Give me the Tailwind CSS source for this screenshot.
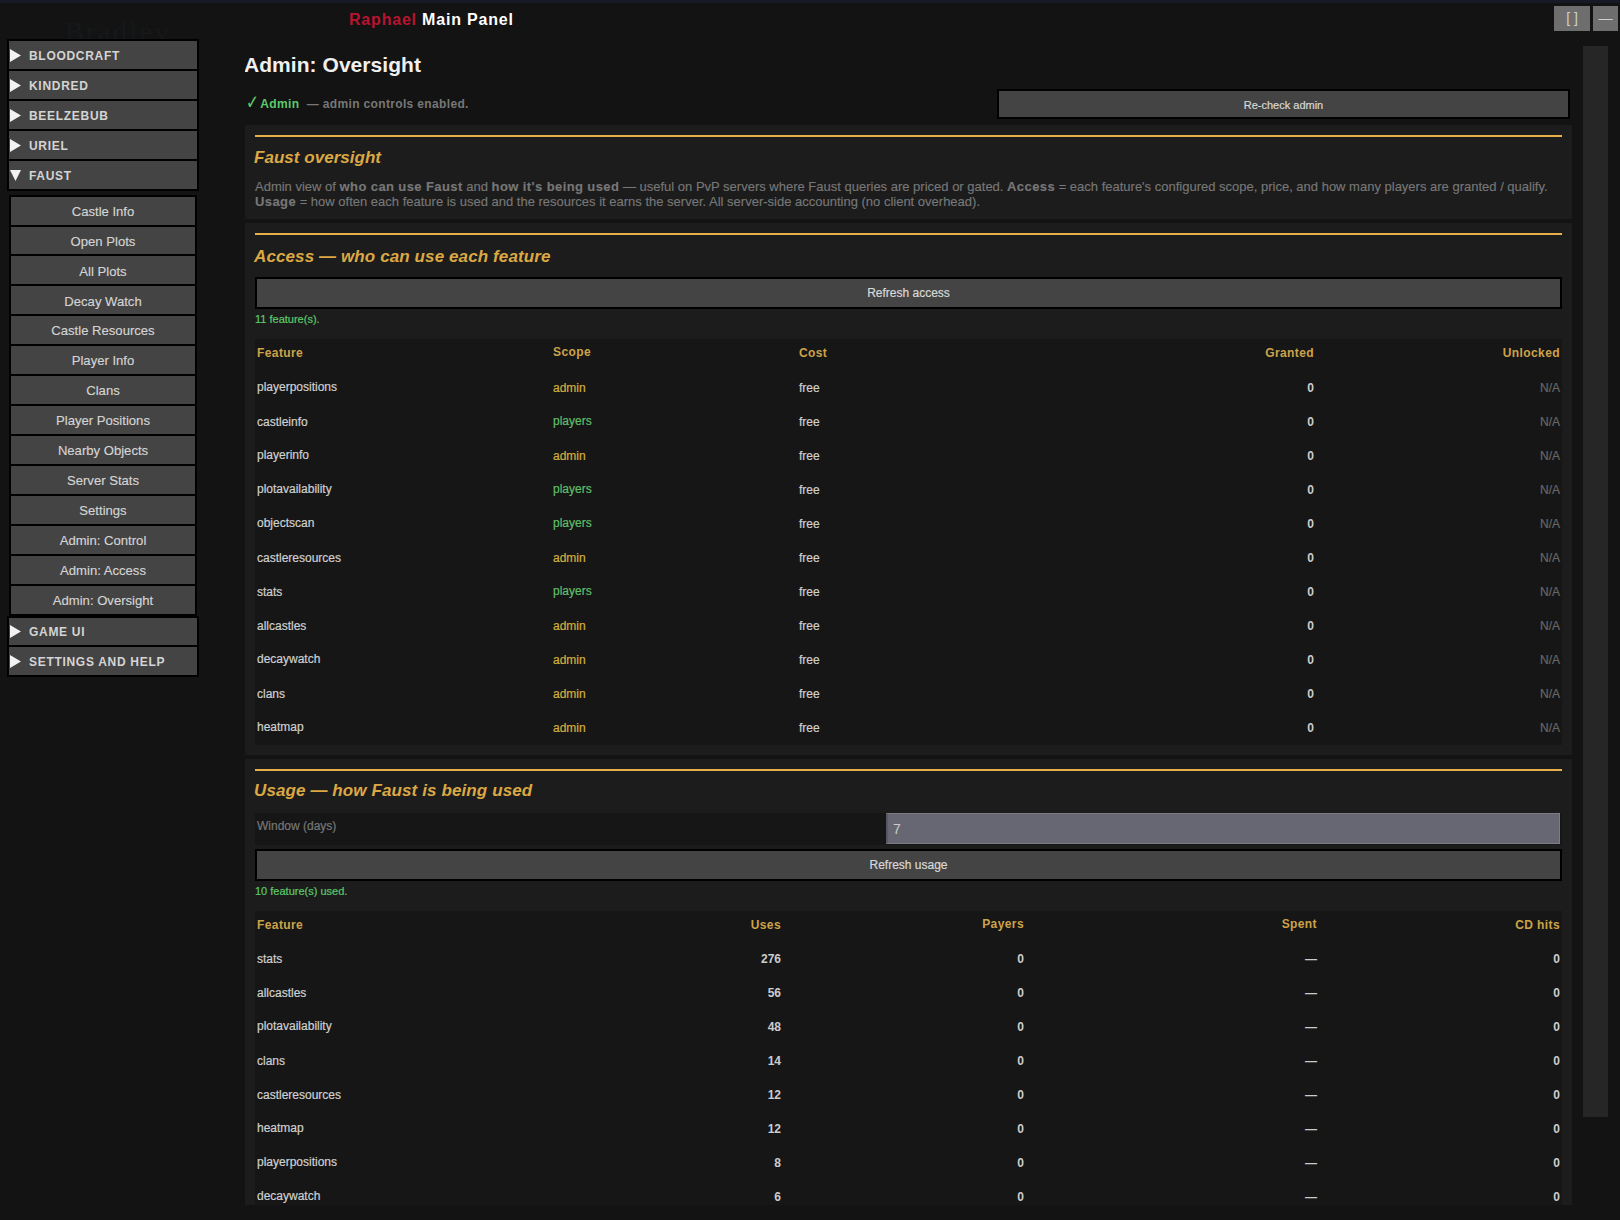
<!DOCTYPE html>
<html><head><meta charset="utf-8"><script src="https://cdn.jsdelivr.net/npm/@tailwindcss/browser@4"></script></head>
<body class="bg-[#131313] m-0 font-['Liberation_Sans',Arial,sans-serif]">
<div class="relative w-[1620px] h-[1220px] overflow-hidden flex flex-col bg-[#131313]">
  <div class="h-[3px] bg-[#151a24] shrink-0"></div>
  <span class="absolute left-[65px] top-[11px] font-['Liberation_Serif',serif] text-[28px] tracking-[2.5px] text-[#15191c]">Bradley</span>
  <div class="h-[36px] shrink-0 flex items-start">
    <div class="ml-[349px] mt-[7px] text-[16px] leading-[20px] font-bold tracking-[0.8px] text-white"><span class="text-[#b8142f]">Raphael</span> Main Panel</div>
    <div class="ml-auto mr-[2px] mt-[3px] flex gap-[3px]">
      <div class="w-[36px] h-[25px] bg-[#6e6e6e] text-[#d0d0d0] text-[14px] flex items-center justify-center">[ ]</div>
      <div class="w-[25px] h-[25px] bg-[#6e6e6e] text-[#d0d0d0] text-[14px] flex items-center justify-center">—</div>
    </div>
  </div>
  <div class="flex flex-1 min-h-0">
    <aside class="relative w-[245px] shrink-0 pl-[7px] text-[#d4d4d4]">
      <div class="w-[192px] bg-black p-[2px] flex flex-col gap-[2px]">
        <div class="h-[27.93px] pt-[2px] bg-[#444444] flex items-center font-bold text-[12px] tracking-[0.7px]"><svg class="w-[11px] h-[13px] ml-[1px] mr-[8px]" viewBox="0 0 11 13"><path d="M0 0 L11 6.5 L0 13Z" fill="#f2f2f2"/></svg>BLOODCRAFT</div>
        <div class="h-[27.93px] pt-[2px] bg-[#444444] flex items-center font-bold text-[12px] tracking-[0.7px]"><svg class="w-[11px] h-[13px] ml-[1px] mr-[8px]" viewBox="0 0 11 13"><path d="M0 0 L11 6.5 L0 13Z" fill="#f2f2f2"/></svg>KINDRED</div>
        <div class="h-[27.93px] pt-[2px] bg-[#444444] flex items-center font-bold text-[12px] tracking-[0.7px]"><svg class="w-[11px] h-[13px] ml-[1px] mr-[8px]" viewBox="0 0 11 13"><path d="M0 0 L11 6.5 L0 13Z" fill="#f2f2f2"/></svg>BEELZEBUB</div>
        <div class="h-[27.93px] pt-[2px] bg-[#444444] flex items-center font-bold text-[12px] tracking-[0.7px]"><svg class="w-[11px] h-[13px] ml-[1px] mr-[8px]" viewBox="0 0 11 13"><path d="M0 0 L11 6.5 L0 13Z" fill="#f2f2f2"/></svg>URIEL</div>
        <div class="h-[27.93px] pt-[2px] bg-[#444444] flex items-center font-bold text-[12px] tracking-[0.7px]"><svg class="w-[11px] h-[11px] ml-[1px] mr-[8px]" viewBox="0 0 11 11"><path d="M0 0 L11 0 L5.5 11Z" fill="#f2f2f2"/></svg>FAUST</div>
      </div>
      <div class="w-[188px] ml-[2px] mt-[4px] bg-black p-[2px] flex flex-col gap-[2px] text-[13.1px] text-center [-webkit-text-stroke:0.15px]">
        <div class="h-[27.93px] pt-[2px] bg-[#444444] flex items-center justify-center">Castle Info</div>
        <div class="h-[27.93px] pt-[2px] bg-[#444444] flex items-center justify-center">Open Plots</div>
        <div class="h-[27.93px] pt-[2px] bg-[#444444] flex items-center justify-center">All Plots</div>
        <div class="h-[27.93px] pt-[2px] bg-[#444444] flex items-center justify-center">Decay Watch</div>
        <div class="h-[27.93px] pt-[2px] bg-[#444444] flex items-center justify-center">Castle Resources</div>
        <div class="h-[27.93px] pt-[2px] bg-[#444444] flex items-center justify-center">Player Info</div>
        <div class="h-[27.93px] pt-[2px] bg-[#444444] flex items-center justify-center">Clans</div>
        <div class="h-[27.93px] pt-[2px] bg-[#444444] flex items-center justify-center">Player Positions</div>
        <div class="h-[27.93px] pt-[2px] bg-[#444444] flex items-center justify-center">Nearby Objects</div>
        <div class="h-[27.93px] pt-[2px] bg-[#444444] flex items-center justify-center">Server Stats</div>
        <div class="h-[27.93px] pt-[2px] bg-[#444444] flex items-center justify-center">Settings</div>
        <div class="h-[27.93px] pt-[2px] bg-[#444444] flex items-center justify-center">Admin: Control</div>
        <div class="h-[27.93px] pt-[2px] bg-[#444444] flex items-center justify-center">Admin: Access</div>
        <div class="h-[27.93px] pt-[2px] bg-[#444444] flex items-center justify-center">Admin: Oversight</div>
      </div>
      <div class="w-[192px] bg-black p-[2px] flex flex-col gap-[2px]">
        <div class="h-[27.93px] pt-[1px] bg-[#444444] flex items-center font-bold text-[12px] tracking-[0.7px]"><svg class="w-[11px] h-[13px] ml-[1px] mr-[8px]" viewBox="0 0 11 13"><path d="M0 0 L11 6.5 L0 13Z" fill="#f2f2f2"/></svg>GAME UI</div>
        <div class="h-[27.93px] pt-[1px] bg-[#444444] flex items-center font-bold text-[12px] tracking-[0.7px]"><svg class="w-[11px] h-[13px] ml-[1px] mr-[8px]" viewBox="0 0 11 13"><path d="M0 0 L11 6.5 L0 13Z" fill="#f2f2f2"/></svg>SETTINGS AND HELP</div>
      </div>
    </aside>
    <main class="w-[1327px] shrink-0 h-[1166px] overflow-hidden">
      <h1 class="h-[50px] ml-[-1px] pt-[13px] text-[21px] leading-[26px] font-bold tracking-[0.05px] text-[#f0f0f0]">Admin: Oversight</h1>
      <div class="h-[36px] flex items-start">
        <div class="mt-[6px] text-[12px] leading-[16px] font-bold tracking-[0.35px] text-[#777777]"><span class="text-[#5cc96a]"><span class="inline-block w-[9px] ml-[1px] mr-[2px] text-[15px] leading-[16px] font-normal scale-y-[1.3]">✓</span> Admin</span>&nbsp; — admin controls enabled.</div>
        <div class="ml-auto mr-[2px] w-[573px] h-[30px] pt-[2px] bg-[#444444] border-2 border-black flex items-center justify-center text-[11px] text-[#d8d8d8] [-webkit-text-stroke:0.2px]">Re-check admin</div>
      </div>
      <section class="bg-[#1c1c1c] h-[94px] px-[10px] pt-[10px] mb-[4px]">
        <div class="h-[2px] bg-[#e8b04b]"></div>
        <h2 class="ml-[-1px] mt-[11px] text-[17px] leading-[20px] font-bold italic tracking-[0.03px] text-[#dba844]">Faust oversight</h2>
        <p class="mt-[11px] text-[13px] leading-[15px] text-[#777777] [-webkit-text-stroke:0.15px]">Admin view of <b class="tracking-[0.4px]">who can use Faust</b> and <b class="tracking-[0.4px]">how it's being used</b> — useful on PvP servers where Faust queries are priced or gated. <b class="tracking-[0.4px]">Access</b> = each feature's configured scope, price, and how many players are granted / qualify. <b class="tracking-[0.4px]">Usage</b> = how often each feature is used and the resources it earns the server. All server-side accounting (no client overhead).</p>
      </section>
      <section class="bg-[#1c1c1c] h-[532px] px-[10px] pt-[10px] mb-[4px]">
        <div class="h-[2px] bg-[#e8b04b]"></div>
        <h2 class="ml-[-1px] mt-[12px] text-[17px] leading-[20px] font-bold italic tracking-[0.11px] text-[#dba844]">Access — who can use each feature</h2>
        <div class="mt-[10px] h-[32px] bg-[#444444] border-2 border-black flex items-center justify-center text-[12px] text-[#d8d8d8] [-webkit-text-stroke:0.2px]">Refresh access</div>
        <div class="mt-[3px] h-[15px] leading-[15px] text-[11px] text-[#5cc96a] [-webkit-text-stroke:0.2px]">11 feature(s).</div>
        <div class="mt-[12px] bg-[#161616] text-[12px] text-[#d0d0d0] [-webkit-text-stroke:0.2px] [&_b]:[-webkit-text-stroke:0px] [&_b]:text-[#cccccc]">
          <div class="h-[32px] px-[2px] grid grid-cols-[296px_246px_200px_315px_246px] items-center font-bold tracking-[0.4px] text-[#cda349] [-webkit-text-stroke:0px]"><span class="pb-[4px]">Feature</span><span class="pb-[6px]">Scope</span><span class="pb-[4px]">Cost</span><span class="pb-[4px] text-right">Granted</span><span class="pb-[4px] text-right">Unlocked</span></div>
          <div class="h-[34px] px-[2px] grid grid-cols-[296px_246px_200px_315px_246px] items-center"><span class="pb-[2px]">playerpositions</span><span class="text-[#d4b03c]">admin</span><span>free</span><b class="text-right">0</b><span class="text-right text-[#666666]">N/A</span></div>
          <div class="h-[34px] px-[2px] grid grid-cols-[296px_246px_200px_315px_246px] items-center"><span>castleinfo</span><span class="pb-[2px] text-[#5fbf68]">players</span><span>free</span><b class="text-right">0</b><span class="text-right text-[#666666]">N/A</span></div>
          <div class="h-[34px] px-[2px] grid grid-cols-[296px_246px_200px_315px_246px] items-center"><span class="pb-[2px]">playerinfo</span><span class="text-[#d4b03c]">admin</span><span>free</span><b class="text-right">0</b><span class="text-right text-[#666666]">N/A</span></div>
          <div class="h-[34px] px-[2px] grid grid-cols-[296px_246px_200px_315px_246px] items-center"><span class="pb-[2px]">plotavailability</span><span class="pb-[2px] text-[#5fbf68]">players</span><span>free</span><b class="text-right">0</b><span class="text-right text-[#666666]">N/A</span></div>
          <div class="h-[34px] px-[2px] grid grid-cols-[296px_246px_200px_315px_246px] items-center"><span class="pb-[2px]">objectscan</span><span class="pb-[2px] text-[#5fbf68]">players</span><span>free</span><b class="text-right">0</b><span class="text-right text-[#666666]">N/A</span></div>
          <div class="h-[34px] px-[2px] grid grid-cols-[296px_246px_200px_315px_246px] items-center"><span>castleresources</span><span class="text-[#d4b03c]">admin</span><span>free</span><b class="text-right">0</b><span class="text-right text-[#666666]">N/A</span></div>
          <div class="h-[34px] px-[2px] grid grid-cols-[296px_246px_200px_315px_246px] items-center"><span>stats</span><span class="pb-[2px] text-[#5fbf68]">players</span><span>free</span><b class="text-right">0</b><span class="text-right text-[#666666]">N/A</span></div>
          <div class="h-[34px] px-[2px] grid grid-cols-[296px_246px_200px_315px_246px] items-center"><span>allcastles</span><span class="text-[#d4b03c]">admin</span><span>free</span><b class="text-right">0</b><span class="text-right text-[#666666]">N/A</span></div>
          <div class="h-[34px] px-[2px] grid grid-cols-[296px_246px_200px_315px_246px] items-center"><span class="pb-[2px]">decaywatch</span><span class="text-[#d4b03c]">admin</span><span>free</span><b class="text-right">0</b><span class="text-right text-[#666666]">N/A</span></div>
          <div class="h-[34px] px-[2px] grid grid-cols-[296px_246px_200px_315px_246px] items-center"><span>clans</span><span class="text-[#d4b03c]">admin</span><span>free</span><b class="text-right">0</b><span class="text-right text-[#666666]">N/A</span></div>
          <div class="h-[34px] px-[2px] grid grid-cols-[296px_246px_200px_315px_246px] items-center"><span class="pb-[2px]">heatmap</span><span class="text-[#d4b03c]">admin</span><span>free</span><b class="text-right">0</b><span class="text-right text-[#666666]">N/A</span></div>
        </div>
      </section>
      <section class="bg-[#1c1c1c] px-[10px] pt-[10px]">
        <div class="h-[2px] bg-[#e8b04b]"></div>
        <h2 class="ml-[-1px] mt-[10px] text-[17px] leading-[20px] font-bold italic tracking-[0.11px] text-[#dba844]">Usage — how Faust is being used</h2>
        <div class="mt-[12px] h-[32px] bg-[#161616] flex">
          <span class="w-[631px] pl-[2px] pb-[6px] flex items-center text-[12px] text-[#777777] [-webkit-text-stroke:0.2px]">Window (days)</span>
          <div class="w-[674px] h-[31px] pt-[1px] bg-[#676773] border border-[#7d7d88] border-l-2 border-l-[#585862] pl-[5px] flex items-center text-[14px] text-[#cccccc]">7</div>
        </div>
        <div class="mt-[4px] h-[32px] bg-[#444444] border-2 border-black flex items-center justify-center text-[12px] text-[#d8d8d8] [-webkit-text-stroke:0.2px]">Refresh usage</div>
        <div class="mt-[3px] h-[15px] leading-[15px] text-[11px] text-[#5cc96a] [-webkit-text-stroke:0.2px]">10 feature(s) used.</div>
        <div class="mt-[12px] bg-[#161616] text-[12px] text-[#d0d0d0] [-webkit-text-stroke:0.2px] [&_b]:[-webkit-text-stroke:0px] [&_b]:text-[#cccccc]">
          <div class="h-[31px] px-[2px] grid grid-cols-[300px_224px_243px_293px_243px] items-center font-bold tracking-[0.4px] text-[#cda349] [-webkit-text-stroke:0px]"><span class="pb-[3px]">Feature</span><span class="pb-[3px] text-right">Uses</span><span class="pb-[5px] text-right">Payers</span><span class="pb-[5px] text-right">Spent</span><span class="pb-[3px] text-right">CD hits</span></div>
          <div class="h-[34px] px-[2px] grid grid-cols-[300px_224px_243px_293px_243px] items-center"><span>stats</span><b class="text-right">276</b><b class="text-right">0</b><b class="text-right">—</b><b class="text-right">0</b></div>
          <div class="h-[34px] px-[2px] grid grid-cols-[300px_224px_243px_293px_243px] items-center"><span>allcastles</span><b class="text-right">56</b><b class="text-right">0</b><b class="text-right">—</b><b class="text-right">0</b></div>
          <div class="h-[34px] px-[2px] grid grid-cols-[300px_224px_243px_293px_243px] items-center"><span class="pb-[2px]">plotavailability</span><b class="text-right">48</b><b class="text-right">0</b><b class="text-right">—</b><b class="text-right">0</b></div>
          <div class="h-[34px] px-[2px] grid grid-cols-[300px_224px_243px_293px_243px] items-center"><span>clans</span><b class="text-right">14</b><b class="text-right">0</b><b class="text-right">—</b><b class="text-right">0</b></div>
          <div class="h-[34px] px-[2px] grid grid-cols-[300px_224px_243px_293px_243px] items-center"><span>castleresources</span><b class="text-right">12</b><b class="text-right">0</b><b class="text-right">—</b><b class="text-right">0</b></div>
          <div class="h-[34px] px-[2px] grid grid-cols-[300px_224px_243px_293px_243px] items-center"><span class="pb-[2px]">heatmap</span><b class="text-right">12</b><b class="text-right">0</b><b class="text-right">—</b><b class="text-right">0</b></div>
          <div class="h-[34px] px-[2px] grid grid-cols-[300px_224px_243px_293px_243px] items-center"><span class="pb-[2px]">playerpositions</span><b class="text-right">8</b><b class="text-right">0</b><b class="text-right">—</b><b class="text-right">0</b></div>
          <div class="h-[34px] px-[2px] grid grid-cols-[300px_224px_243px_293px_243px] items-center"><span class="pb-[2px]">decaywatch</span><b class="text-right">6</b><b class="text-right">0</b><b class="text-right">—</b><b class="text-right">0</b></div>
        </div>
      </section>
    </main>
    <div class="w-[25px] ml-[11px] mt-[7px] h-[1071px] bg-[#262626]"></div>
  </div>
</div>
</body></html>
